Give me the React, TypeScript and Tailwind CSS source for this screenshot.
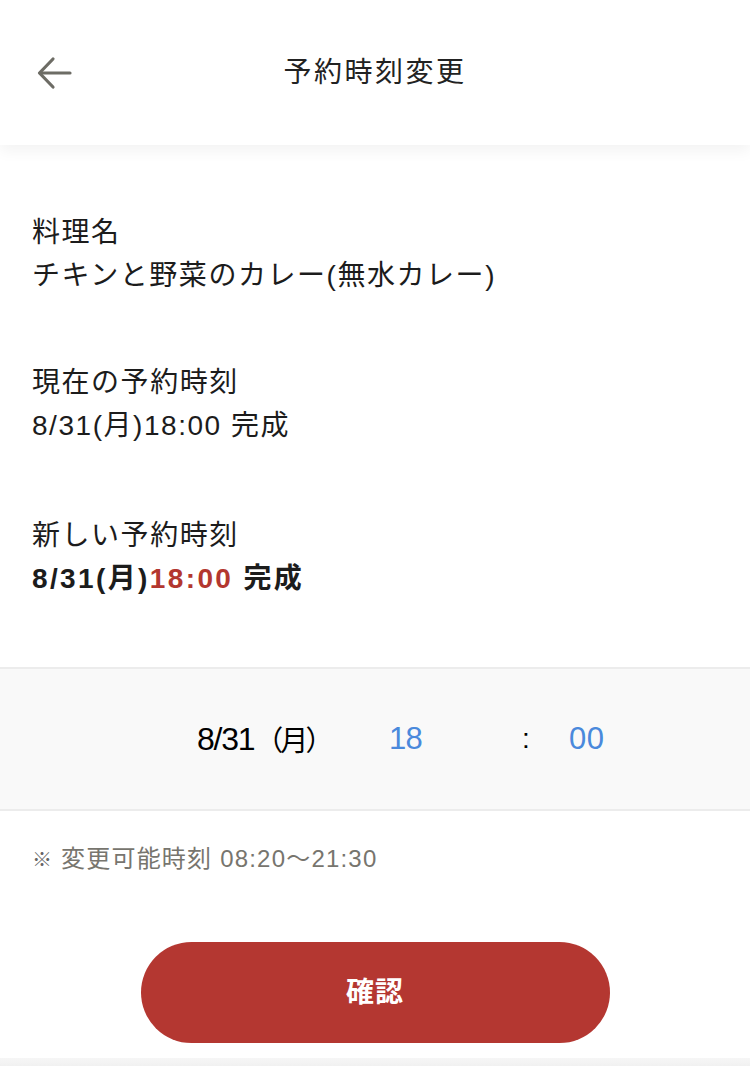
import React from "react";

const font = { fontFamily: '"Liberation Sans", "Noto Sans CJK JP", sans-serif' };

export default function App() {
  return (
    <div className="w-[750px] h-[1066px] bg-white relative overflow-hidden text-[#1c1c1c]" style={font}>
      {/* header */}
      <header className="relative z-10 h-[145px] bg-white flex items-center justify-center shadow-[0_6px_14px_rgba(0,0,0,0.05)]">
        <button className="absolute left-[36px] top-[56px] w-[36px] h-[34px] flex items-center justify-center">
          <svg width="36" height="34" viewBox="0 0 36 34" fill="none">
            <path d="M34 17H4" stroke="#6d6c65" strokeWidth="3.2" strokeLinecap="round" />
            <path d="M17 3L3.5 17L17 31" stroke="#6d6c65" strokeWidth="3.2" strokeLinecap="round" strokeLinejoin="round" />
          </svg>
        </button>
        <h1 className="text-[28px] tracking-[0.09em] text-[#222] font-normal">予約時刻変更</h1>
      </header>

      {/* content */}
      <main className="pl-[32px] pt-[66px] text-[28px] leading-[43px] tracking-[0.055em]">
        <section>
          <div>料理名</div>
          <div>チキンと野菜のカレー(無水カレー)</div>
        </section>
        <section className="mt-[64px]">
          <div>現在の予約時刻</div>
          <div>8/31(月)18:00 完成</div>
        </section>
        <section className="mt-[67px]">
          <div>新しい予約時刻</div>
          <div className="font-bold tracking-[0.085em]">
            8/31(月)<span className="text-[#b3372f]">18:00</span> 完成
          </div>
        </section>
      </main>

      {/* picker */}
      <div className="mt-[67px] h-[144px] bg-[#f9f9f9] border-y-2 border-[#ececec] flex items-center pl-[197px]">
        <div className="w-[192px] flex items-center text-black">
          <span className="text-[32px] tracking-[-0.04em]">8/31</span>
          <span className="text-[28px] tracking-[-0.1em] ml-[1px]" style={{ fontFamily: '"Noto Sans CJK JP", sans-serif' }}>（月）</span>
        </div>
        <div className="w-[133px] text-[31px] text-[#4a89dc] tracking-[-0.02em]">18</div>
        <div className="w-[47px] text-[28px] text-black">:</div>
        <div className="text-[31px] text-[#4a89dc] tracking-[0.02em]">00</div>
      </div>

      {/* note */}
      <p className="pl-[32px] mt-[33px] text-[24px] leading-[30px] text-[#77756e] tracking-[0.05em]">
        <span className="text-[20px] text-[#666]">※</span> 変更可能時刻 08:20〜21:30
      </p>

      {/* button */}
      <div className="flex justify-center mt-[67px]">
        <button className="w-[469px] h-[101px] rounded-full bg-[#b43731] text-white text-[28px] font-bold tracking-[0.04em]">
          確認
        </button>
      </div>

      <div className="absolute left-0 right-0 bottom-0 h-[8px] bg-gradient-to-b from-[#f6f6f6] to-[#f1f1f1]" />
    </div>
  );
}
